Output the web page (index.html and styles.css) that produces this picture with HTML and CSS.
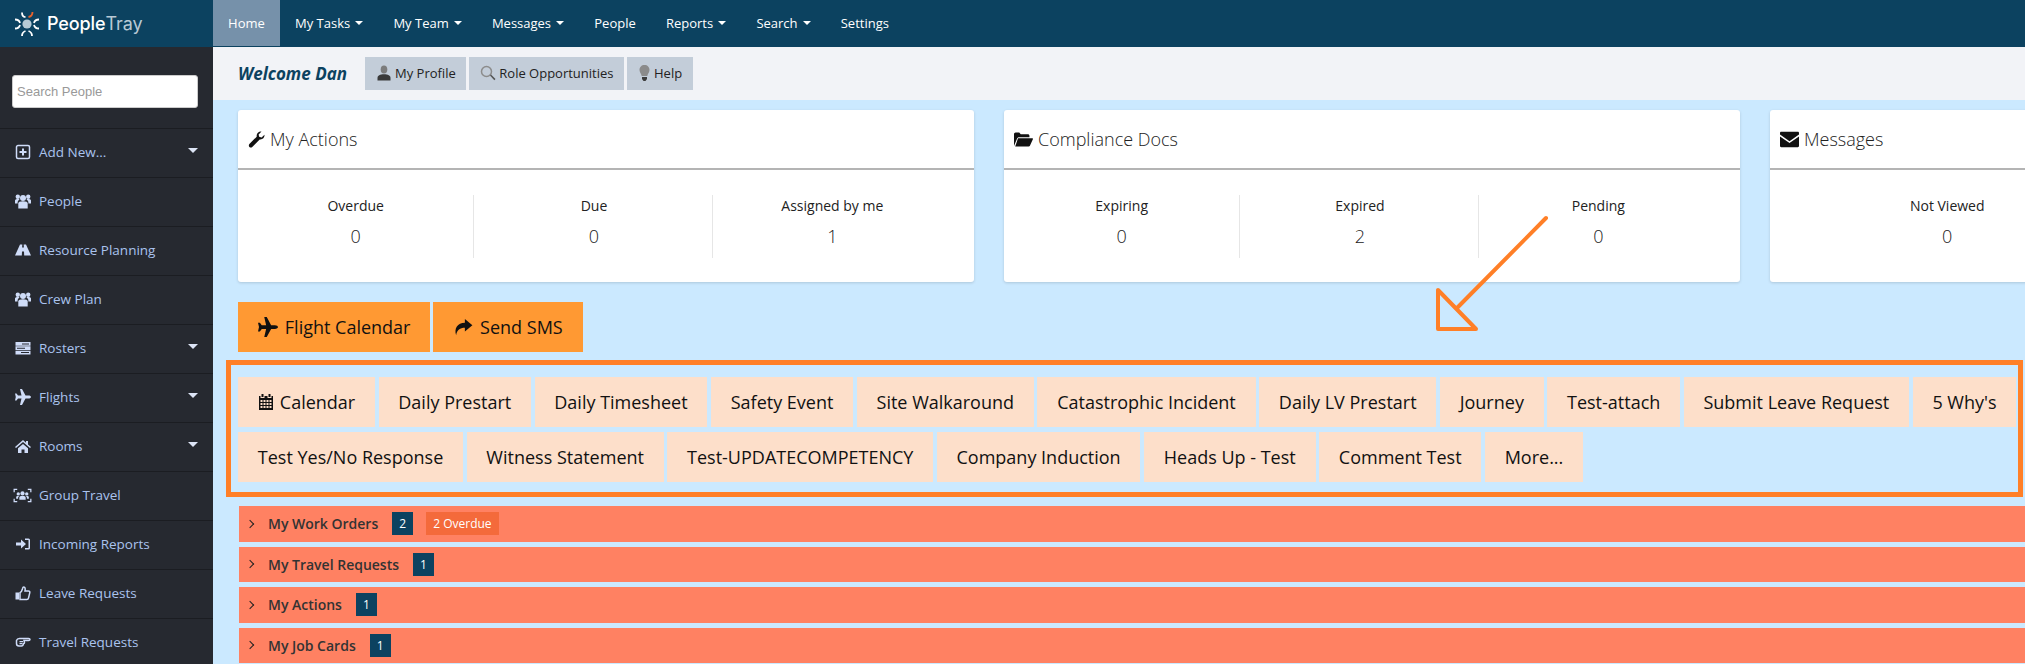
FILE: index.html
```html
<!DOCTYPE html>
<html lang="en">
<head>
    <meta charset="UTF-8">
    <meta name="viewport" content="width=device-width, initial-scale=1.0">
    <title>PeopleTray</title>
    <link rel="stylesheet" href="styles.css">
</head>
<body>
    <svg class="defs" aria-hidden="true">
        <symbol id="i-plus" viewBox="0 0 16 16"><path d="M3 1.500h10A1.500 1.500 0 0 1 14.500 3v10a1.500 1.500 0 0 1-1.500 1.500H3A1.500 1.500 0 0 1 1.500 13V3A1.500 1.500 0 0 1 3 1.500z" fill="none" stroke="currentColor" stroke-width="1.500"/><path d="M7 4.500h2V7h2.500v2H9v2.500H7V9H4.500V7H7z"/></symbol>
        <symbol id="i-users" viewBox="0 0 16 16"><circle cx="8" cy="5" r="3"/><circle cx="2.800" cy="3.800" r="2.200"/><circle cx="13.200" cy="3.800" r="2.200"/><path d="M3.300 15.500V10.500C3.300 9 5 8.200 8 8.200s4.700.8 4.700 2.300v5z"/><path d="M0 10.500V7.500c0-1 1.200-1.500 3-1.500.8 0 1.200.1 1.600.4-1 .6-2 1.500-2 3.100v1zM16 10.500V7.500c0-1-1.200-1.500-3-1.500-.8 0-1.200.1-1.600.4 1 .6 2 1.500 2 3.100v1z"/></symbol>
        <symbol id="i-road" viewBox="0 0 16 16"><path d="M5 2.500h2.300l-.2 3h1.800l-.2-3H11l5 11H9.200l-.2-4H7l-.2 4H0z"/></symbol>
        <symbol id="i-roster" viewBox="0 0 16 16"><path fill-rule="evenodd" d="M.500 2h15v3.800H.500zM7 3.400v1h7v-1zM.500 6.300h15v3.800H.500zM2 7.700v1h8v-1zM.500 10.700h15v3.800H.500zM6 12.100v1h8v-1z"/></symbol>
        <symbol id="i-plane" viewBox="0 0 16 16"><path d="M16 8c0 .8-1 1.500-2.500 1.500h-3L7 16H5l1.500-6.500H3L1.500 11.500H0l.8-3.500L0 4.500h1.500L3 6.500h3.500L5 0h2l3.500 6.500h3C15 6.500 16 7.200 16 8z"/></symbol>
        <symbol id="i-home" viewBox="0 0 16 16"><path d="M8 2l3 2.700V3h2v3.500L16 9l-1 1-7-6-7 6-1-1z"/><path d="M3 10.300L8 6l5 4.300V15H9.500v-3.500h-3V15H3z"/></symbol>
        <symbol id="i-group" viewBox="0 0 18 16"><path d="M.500 5V1.500H4v1.200H1.700V5zM14 1.500h3.500V5h-1.200V2.700H14zM.500 11h1.200v2.300H4v1.200H.500zM16.300 11h1.200v3.500H14v-1.200h2.300z"/><circle cx="9" cy="6" r="2"/><circle cx="5" cy="6.500" r="1.600"/><circle cx="13" cy="6.500" r="1.600"/><path d="M6 12V9.800c0-.8 1.200-1.300 3-1.300s3 .5 3 1.300V12zM3 11V9.500c0-.6.800-1 2-1l.8.100c-.6.400-1 .9-1 1.500V11zM15 11V9.500c0-.6-.8-1-2-1l-.8.100c.6.400 1 .9 1 1.500V11z"/></symbol>
        <symbol id="i-signin" viewBox="0 0 16 16"><path d="M1 6.500h5V3.500L11 8l-5 4.500v-3H1z"/><path d="M10 2.500h3.500A1.500 1.500 0 0 1 15 4v8a1.500 1.500 0 0 1-1.500 1.500H10V12h3.500V4H10z"/></symbol>
        <symbol id="i-thumb" viewBox="0 0 16 16"><path d="M.500 7.500h3.500V14.500H.500z"/><path d="M5 7.700c1.200-.6 2-2 2.500-4 .2-1 .5-1.700 1.300-1.700 1.200 0 1.700 1.500 1.200 4h3.500c1 0 1.500.8 1.300 1.600l-1.300 5.600c-.2.800-.8 1.300-1.600 1.300H5z" fill="none" stroke="currentColor" stroke-width="1.500"/></symbol>
        <symbol id="i-hand" viewBox="0 0 16 16"><path d="M1.500 6.500C2 5 3 4.500 4.500 4.500h9c1 0 1.500.4 1.500 1s-.5 1-1.500 1H9l.5 2c0 .7-.5 1-1 1.200-.2 1.300-.8 2.300-2 2.300H4C2.500 12 1.500 11 1.500 9.500z" fill="none" stroke="currentColor" stroke-width="1.500"/><path d="M4.500 7h3.500v1.200H4.500zM4.500 9h3v1.200h-3z"/></symbol>
        <symbol id="i-wrench" viewBox="0 0 16 16"><path d="M15.500 3.500c.4 2.500-1.700 5-4.500 4.500L4 15c-.8.700-2 .7-2.700 0s-.7-1.900 0-2.700L8.200 5.300C7.700 2.500 10 .2 12.700.5L10 3.200l.5 2.300 2.300.5z"/></symbol>
        <symbol id="i-folder" viewBox="0 0 16 16"><path d="M0 13.500V3.500C0 2.700.6 2 1.400 2h3l1.300 1.500h6c.7 0 1.300.5 1.300 1.300V6H4.500c-.9 0-1.500.4-1.900 1.200z"/><path d="M3.400 7h12.100c.4 0 .6.300.4.700L13.500 13c-.2.500-.6.800-1.200.8H1z"/></symbol>
        <symbol id="i-mail" viewBox="0 0 16 16"><path d="M0 2.500C0 2 .5 1.500 1 1.500h14c.5 0 1 .5 1 1v1.300L8 9.500 0 3.800z"/><path d="M0 5.500l8 5.500 8-5.500v8c0 .5-.5 1-1 1H1c-.5 0-1-.5-1-1z"/></symbol>
        <symbol id="i-calendar" viewBox="0 0 16 16"><path d="M3.500 0h2v3h-2zM10.500 0h2v3h-2z"/><path fill-rule="evenodd" d="M1 2h1.500v2h4V2h3v2h4V2H15v14H1zM2.500 6v2h2V6zM5.500 6v2h2V6zM8.500 6v2h2V6zM11.500 6v2h2V6zM2.500 9v2h2V9zM5.500 9v2h2V9zM8.500 9v2h2V9zM11.500 9v2h2V9zM2.500 12v2h2v-2zM5.500 12v2h2v-2zM8.500 12v2h2v-2zM11.500 12v2h2v-2z"/></symbol>
        <symbol id="i-share" viewBox="0 0 16 16"><path d="M9.500 1.500L15.500 6.500 9.500 11.500V8.500C5.500 8.500 3.300 10 2.500 14.500 .8 9 3.500 4.500 9.500 4.500z"/></symbol>
        <symbol id="i-user" viewBox="0 0 16 16"><ellipse cx="8" cy="4.500" rx="3.300" ry="4" fill="#7c7c7c"/><path d="M1.500 15.500v-2.500c0-2.500 2.500-3.700 6.500-3.700s6.500 1.200 6.500 3.700v2.500z" fill="#3a3a3a"/></symbol>
        <symbol id="i-search" viewBox="0 0 16 16"><circle cx="6.500" cy="6.500" r="5" fill="none" stroke="#8c8c8c" stroke-width="1.500"/><path d="M10 10.500l1-1 4.500 4.500-1.200 1.200z" fill="#555"/></symbol>
        <symbol id="i-bulb" viewBox="0 0 12 16"><path d="M6 0c3 0 5 2.100 5 5 0 2.300-1.700 3.600-2.200 6H3.200C2.700 8.600 1 7.300 1 5c0-2.900 2-5 5-5z" fill="#8b8b8b"/><path d="M3.500 12h5v2L7 16H5l-1.500-2z" fill="#3c3c3c"/></symbol>
    </svg>

    <header class="topbar">
        <a class="logo" href="#home">
            <svg class="logo-mark" viewBox="0 0 26 26" fill="none" stroke="#fff" stroke-width="1.800">
                <circle cx="13" cy="13" r="4.600" fill="#b8cbd6" stroke="none"/>
                <path d="M8 1.500c0 3 2 4.500 3.500 4.700"/>
                <path d="M18.500 1c0 2.500-1.500 4.500-4 5" stroke="#e8622c"/>
                <path d="M1 8.500c2.500 0 4.500 1.500 5 3.500M1 17.500c2.500 0 4.500-1.500 5-3.500"/>
                <path d="M25 8.500c-2.500 0-4.500 1.500-5 3.500M25 17.500c-2.500 0-4.500-1.500-5-3.500"/>
                <path d="M8 25c0-3 2-4.500 3.500-5M18 25c0-3-2-4.500-3.500-5"/>
            </svg>
            <span class="logo-text">People<span class="logo-tray">Tray</span></span>
        </a>
        <nav class="topnav">
            <a href="#home" class="active">Home</a>
            <a href="#tasks">My Tasks <i class="caret"></i></a>
            <a href="#team">My Team <i class="caret"></i></a>
            <a href="#messages">Messages <i class="caret"></i></a>
            <a href="#people">People</a>
            <a href="#reports">Reports <i class="caret"></i></a>
            <a href="#search">Search <i class="caret"></i></a>
            <a href="#settings">Settings</a>
        </nav>
    </header>

    <div class="layout">
        <aside class="sidebar">
            <div class="search-box">
                <input type="text" placeholder="Search People">
            </div>
            <ul class="side-menu">
                <li><a href="#add"><svg class="side-icon"><use href="#i-plus"/></svg>Add New...<i class="side-caret"></i></a></li>
                <li><a href="#people"><svg class="side-icon"><use href="#i-users"/></svg>People</a></li>
                <li><a href="#planning"><svg class="side-icon"><use href="#i-road"/></svg>Resource Planning</a></li>
                <li><a href="#crew"><svg class="side-icon"><use href="#i-users"/></svg>Crew Plan</a></li>
                <li><a href="#rosters"><svg class="side-icon"><use href="#i-roster"/></svg>Rosters<i class="side-caret"></i></a></li>
                <li><a href="#flights"><svg class="side-icon"><use href="#i-plane"/></svg>Flights<i class="side-caret"></i></a></li>
                <li><a href="#rooms"><svg class="side-icon"><use href="#i-home"/></svg>Rooms<i class="side-caret"></i></a></li>
                <li><a href="#group"><svg class="side-icon wide"><use href="#i-group"/></svg>Group Travel</a></li>
                <li><a href="#incoming"><svg class="side-icon"><use href="#i-signin"/></svg>Incoming Reports</a></li>
                <li><a href="#leave"><svg class="side-icon"><use href="#i-thumb"/></svg>Leave Requests</a></li>
                <li><a href="#travel"><svg class="side-icon"><use href="#i-hand"/></svg>Travel Requests</a></li>
            </ul>
        </aside>

        <main class="main-content">
            <div class="welcome-bar">
                <h1>Welcome Dan</h1>
                <div class="welcome-links">
                    <a href="#profile"><svg><use href="#i-user"/></svg>My Profile</a>
                    <a href="#roles"><svg><use href="#i-search"/></svg>Role Opportunities</a>
                    <a href="#help"><svg class="narrow"><use href="#i-bulb"/></svg>Help</a>
                </div>
            </div>

            <div class="content">
                <div class="cards">
                    <section class="card">
                        <h2><svg><use href="#i-wrench"/></svg>My Actions</h2>
                        <div class="stats">
                            <div class="stat"><span>Overdue</span><strong>0</strong></div>
                            <div class="stat"><span>Due</span><strong>0</strong></div>
                            <div class="stat"><span>Assigned by me</span><strong>1</strong></div>
                        </div>
                    </section>
                    <section class="card">
                        <h2><svg class="big"><use href="#i-folder"/></svg>Compliance Docs</h2>
                        <div class="stats">
                            <div class="stat"><span>Expiring</span><strong>0</strong></div>
                            <div class="stat"><span>Expired</span><strong>2</strong></div>
                            <div class="stat"><span>Pending</span><strong>0</strong></div>
                        </div>
                    </section>
                    <section class="card">
                        <h2><svg class="big"><use href="#i-mail"/></svg>Messages</h2>
                        <div class="stats">
                            <div class="stat"><span>Not Viewed</span><strong>0</strong></div>
                            <div class="stat"></div>
                        </div>
                    </section>
                </div>

                <div class="quick-btns">
                    <a href="#calendar"><svg><use href="#i-plane"/></svg>Flight Calendar</a>
                    <a href="#sms"><svg><use href="#i-share"/></svg>Send SMS</a>
                </div>

                <div class="form-links">
                    <a href="#cal"><svg><use href="#i-calendar"/></svg>Calendar</a>
                    <a href="#f1">Daily Prestart</a>
                    <a href="#f2">Daily Timesheet</a>
                    <a href="#f3">Safety Event</a>
                    <a href="#f4">Site Walkaround</a>
                    <a href="#f5">Catastrophic Incident</a>
                    <a href="#f6">Daily LV Prestart</a>
                    <a href="#f7">Journey</a>
                    <a href="#f8">Test-attach</a>
                    <a href="#f9">Submit Leave Request</a>
                    <a href="#f10">5 Why's</a>
                    <a href="#f11">Test Yes/No Response</a>
                    <a href="#f12">Witness Statement</a>
                    <a href="#f13">Test-UPDATECOMPETENCY</a>
                    <a href="#f14">Company Induction</a>
                    <a href="#f15">Heads Up - Test</a>
                    <a href="#f16">Comment Test</a>
                    <a href="#more">More...</a>
                </div>

                <div class="panels">
                    <div class="panel"><i class="chevron"></i><b>My Work Orders</b><span class="badge">2</span><span class="badge overdue">2 Overdue</span></div>
                    <div class="panel"><i class="chevron"></i><b>My Travel Requests</b><span class="badge">1</span></div>
                    <div class="panel"><i class="chevron"></i><b>My Actions</b><span class="badge">1</span></div>
                    <div class="panel"><i class="chevron"></i><b>My Job Cards</b><span class="badge">1</span></div>
                </div>
            </div>
        </main>
    </div>

    <svg class="arrow" viewBox="0 0 120 120" fill="none" stroke="#ff7f27" stroke-width="4" stroke-linecap="round" stroke-linejoin="round">
        <path d="M110 3L21 93"/>
        <path d="M2 75V114H40z"/>
    </svg>
</body>
</html>
```

FILE: styles.css
```css
* {
    box-sizing: border-box;
}

body {
    font-family: "Open Sans", Arial, sans-serif;
    margin: 0;
    height: 664px;
    overflow: hidden;
    position: relative;
    color: #222;
}

a {
    text-decoration: none;
    color: inherit;
}

.defs {
    display: none;
}

/* top bar */
.topbar {
    display: flex;
    height: 47px;
    background-color: #0c4260;
}

.logo {
    width: 213px;
    display: flex;
    align-items: center;
    padding-left: 14px;
    gap: 7px;
}

.logo-mark {
    width: 26px;
    height: 26px;
}

.logo-text {
    font-family: Inter, Arial, sans-serif;
    font-size: 18px;
    font-weight: 500;
    letter-spacing: -0.1px;
    color: #fff;
}

.logo-tray {
    color: #b8c9d5;
    font-weight: 400;
}

.topnav {
    display: flex;
    height: 46px;
}

.topnav a {
    display: flex;
    align-items: center;
    gap: 5px;
    padding: 0 15.1px;
    font-size: 13px;
    color: #fff;
}

.topnav a.active {
    background-color: #7691aa;
}

.caret {
    width: 0;
    height: 0;
    border-left: 4px solid transparent;
    border-right: 4px solid transparent;
    border-top: 4px solid #fff;
}

/* left menu */
.layout {
    display: flex;
    height: 617px;
}

.sidebar {
    width: 213px;
    flex: none;
    background-color: #262930;
}

.search-box {
    height: 81px;
    padding: 28px 12px 0 12px;
}

.search-box input {
    width: 186px;
    height: 33px;
    padding: 0 4px;
    border: 1px solid #ccc;
    border-radius: 3px;
    font-family: "Liberation Sans", Arial, sans-serif;
    font-size: 13px;
}

.search-box input::placeholder {
    color: #999;
}

.side-menu {
    list-style-type: none;
    margin: 0;
    padding: 0;
}

.side-menu li {
    height: 49px;
    border-top: 1px solid #1b1d22;
}

.side-menu a {
    display: flex;
    align-items: center;
    height: 46px;
    padding: 0 15px;
    font-size: 13.5px;
    color: #aac3ee;
}

.side-icon {
    width: 16px;
    height: 16px;
    margin-right: 8px;
    flex: none;
    fill: #cfdcf8;
    color: #cfdcf8;
}

.side-icon.wide {
    width: 19px;
    height: 17px;
    margin-left: -2px;
    margin-right: 7px;
}

.side-caret {
    margin-left: auto;
    margin-bottom: 3px;
    width: 0;
    height: 0;
    border-left: 5px solid transparent;
    border-right: 5px solid transparent;
    border-top: 5px solid #dde5f6;
}

/* main area */
.main-content {
    flex-grow: 1;
    min-width: 0;
    overflow: hidden;
}

.welcome-bar {
    display: flex;
    align-items: center;
    height: 53px;
    padding-left: 25px;
    background-color: #f2f3f7;
}

.welcome-bar h1 {
    width: 127px;
    margin: 0;
    font-size: 17px;
    font-style: italic;
    font-weight: 700;
    color: #0c4260;
}

.welcome-links {
    display: flex;
    gap: 3px;
}

.welcome-links a {
    display: flex;
    align-items: center;
    gap: 3px;
    height: 33px;
    padding: 0 10.5px 2px 11px;
    font-size: 13px;
    background-color: #c3cdd9;
}

.welcome-links svg {
    width: 16px;
    height: 16px;
}

.welcome-links svg.narrow {
    width: 13px;
}

.content {
    height: 564px;
    padding: 10px 2px 0 25px;
    background-color: #cbe9ff;
}

.cards {
    display: flex;
    gap: 30px;
}

.card {
    flex: 0 0 736px;
    height: 172px;
    background-color: white;
    border-radius: 3px;
    box-shadow: 0 1px 3px rgba(0, 0, 0, 0.15);
}

.card h2 {
    display: flex;
    align-items: center;
    gap: 5px;
    height: 60px;
    margin: 0;
    padding: 0 10px;
    font-size: 18px;
    font-weight: 300;
    color: #222;
    border-bottom: 2px solid #b4b4b4;
}

.card h2 svg {
    width: 17px;
    height: 17px;
    fill: #111;
}

.card h2 svg.big {
    width: 19px;
    height: 19px;
}

.stats {
    display: flex;
    width: 714px;
    margin: 25px 0 0 -2px;
}

.stat {
    flex: 1;
    height: 63px;
    padding-left: 2px;
    text-align: center;
    border-left: 1px solid #e6e6e6;
}

.stat:first-child {
    border-left: none;
}

.stat span {
    display: block;
    font-size: 14px;
    line-height: 22px;
    color: #222;
}

.stat strong {
    display: block;
    margin-top: 7px;
    font-size: 18px;
    line-height: 24px;
    font-weight: 300;
}

.quick-btns {
    display: flex;
    gap: 3px;
    margin-top: 20px;
}

.quick-btns a {
    display: flex;
    align-items: center;
    gap: 7px;
    height: 50px;
    padding: 0 19.8px;
    font-size: 18px;
    color: #111;
    background-color: #ff9933;
}

.quick-btns svg {
    width: 20px;
    height: 20px;
    fill: #111;
}

/* the forms, with the orange box round them */
.form-links {
    display: flex;
    flex-wrap: wrap;
    gap: 5px 3.5px;
    margin: 8px 0 0 -12px;
    padding: 12px 0 11px 7px;
    height: 137px;
    border: 5px solid #ff7f27;
}

.form-links a {
    display: flex;
    align-items: center;
    gap: 6px;
    height: 50px;
    padding: 0 19.8px;
    font-size: 18px;
    color: #111;
    background-color: #fddfca;
}

.form-links svg {
    width: 16px;
    height: 18px;
    fill: #111;
}

/* accordion rows */
.panels {
    display: flex;
    flex-direction: column;
    gap: 5px;
    margin: 9px -2px 0 1px;
}

.panel {
    display: flex;
    align-items: center;
    height: 35.5px;
    padding-left: 8px;
    font-size: 14px;
    color: #333;
    background-color: #ff8162;
}

.panel b {
    font-weight: 600;
}

.chevron {
    width: 6px;
    height: 6px;
    margin-right: 15px;
    border-top: 1.5px solid #222;
    border-right: 1.5px solid #222;
    transform: rotate(45deg);
}

.badge {
    display: flex;
    align-items: center;
    justify-content: center;
    height: 23px;
    min-width: 21px;
    margin-left: 14px;
    padding: 0 7px;
    font-size: 12px;
    color: #fff;
    background-color: #0c4260;
}

.badge.overdue {
    background-color: #f46a3b;
    margin-left: 13px;
}

.arrow {
    position: absolute;
    left: 1436px;
    top: 215px;
    width: 120px;
    height: 120px;
}
```
